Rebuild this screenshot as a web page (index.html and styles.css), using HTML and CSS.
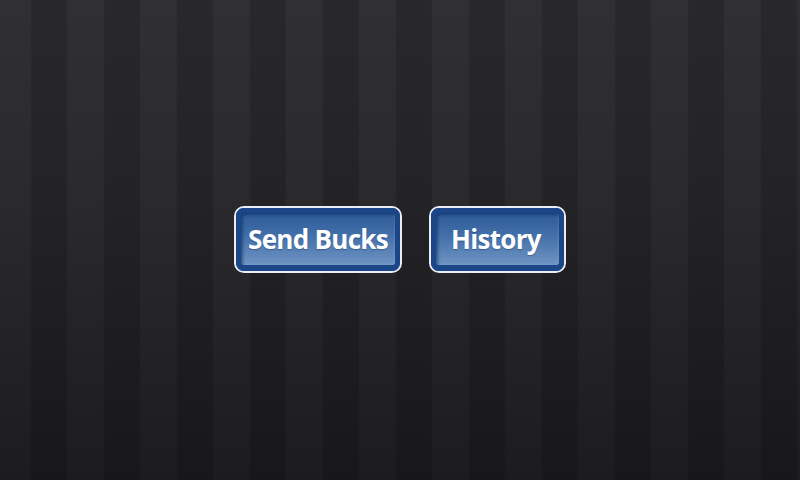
FILE: index.html
```html
<!DOCTYPE html>
<html lang="en">
<head>
<meta charset="utf-8">
<title>Bucks</title>
<link rel="stylesheet" href="styles.css">
</head>
<body>
<main class="screen">
  <div class="actions">
    <button class="btn btn-send" type="button"><span class="btn-face">Send Bucks</span></button>
    <button class="btn btn-history" type="button"><span class="btn-face">History</span></button>
  </div>
</main>
</body>
</html>
```
FILE: styles.css
```css
html, body {
  margin: 0;
  padding: 0;
}
body {
  width: 800px;
  height: 480px;
  overflow: hidden;
  font-family: "Open Sans", "Liberation Sans", sans-serif;
}
.screen {
  width: 800px;
  height: 480px;
  display: flex;
  align-items: center;
  justify-content: center;
  background:
    linear-gradient(to bottom, rgba(0,0,0,0) 0%, rgba(0,0,0,0.12) 40%, rgba(0,0,0,0.42) 100%),
    repeating-linear-gradient(90deg,
      #302f33 -6px, #302f33 30px,
      #2c2b2f 31px,
      #28272b 32px, #28272b 66px,
      #2c2b2f 67px);
}
.actions {
  display: flex;
  gap: 27px;
  margin-top: -2px;
}
.btn {
  display: block;
  height: 67px;
  padding: 0;
  margin: 0;
  border: 2px solid #e9eef6;
  border-radius: 10px;
  background: #1b4788;
  box-sizing: border-box;
  cursor: pointer;
  font-family: inherit;
}
.btn-send { width: 168px; }
.btn-history { width: 137px; }
.btn-face {
  display: flex;
  align-items: center;
  justify-content: center;
  box-sizing: border-box;
  height: 100%;
  border: 5px solid #1b4788;
  border-bottom-width: 6px;
  border-radius: 8px;
  background: linear-gradient(to bottom, #2d5a98 0%, #4471aa 45%, #6e93c2 100%);
  box-shadow: inset 2px 2px 3px rgba(10, 40, 90, 0.55), inset -1px -1px 2px rgba(255,255,255,0.12);
  background-clip: padding-box;
  color: #ffffff;
  font-family: "Open Sans", "Liberation Sans", sans-serif;
  font-weight: 700;
  font-size: 26px;
  letter-spacing: -0.7px;
  line-height: 1;
  padding-top: 1px;
  white-space: nowrap;
  text-shadow: 0 1px 1px rgba(0, 30, 80, 0.35);
}
.btn-history .btn-face {
  padding-right: 3px;
}
```
